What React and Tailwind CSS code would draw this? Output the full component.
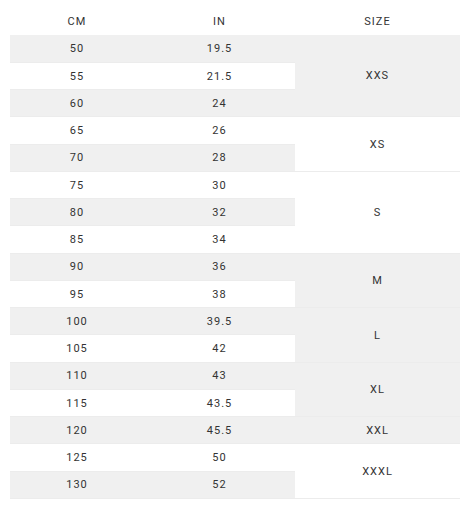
const rows = [
  ['50', '19.5'], ['55', '21.5'], ['60', '24'],
  ['65', '26'], ['70', '28'],
  ['75', '30'], ['80', '32'], ['85', '34'],
  ['90', '36'], ['95', '38'],
  ['100', '39.5'], ['105', '42'],
  ['110', '43'], ['115', '43.5'],
  ['120', '45.5'],
  ['125', '50'], ['130', '52'],
]

// size label -> [first row index, number of rows]
const sizes = [
  ['XXS', 0, 3], ['XS', 3, 2], ['S', 5, 3], ['M', 8, 2],
  ['L', 10, 2], ['XL', 12, 2], ['XXL', 14, 1], ['XXXL', 15, 2],
]

const bg = (i) => (i % 2 === 0 ? 'bg-[#f0f0f0]' : 'bg-white')

export default function App() {
  return (
    <div className="w-[474px] h-[513px] bg-white pl-[10px] font-['Roboto',sans-serif] text-[11px] tracking-[1px] text-[#333]">
      <table className="w-[450px] border-collapse table-fixed">
        <colgroup>
          <col className="w-[134px]" />
          <col className="w-[151px]" />
          <col className="w-[165px]" />
        </colgroup>
        <thead>
          <tr>
            <th className="h-[35px] pt-[9px] font-normal text-center">CM</th>
            <th className="h-[35px] pt-[9px] font-normal text-center">IN</th>
            <th className="h-[35px] pt-[9px] font-normal text-center">SIZE</th>
          </tr>
        </thead>
        <tbody>
          {rows.map(([cm, inch], i) => {
            const size = sizes.find((s) => s[1] === i)
            return (
              <tr key={cm}>
                <td className={`h-[27.25px] p-0 pt-[2px] text-center border-b border-[#ececec] ${bg(i)}`}>{cm}</td>
                <td className={`h-[27.25px] p-0 pt-[2px] text-center border-b border-[#ececec] ${bg(i)}`}>{inch}</td>
                {size && (
                  <td rowSpan={size[2]} className={`p-0 pt-[2px] text-center border-b border-[#ececec] ${bg(i)}`}>
                    {size[0]}
                  </td>
                )}
              </tr>
            )
          })}
        </tbody>
      </table>
    </div>
  )
}
